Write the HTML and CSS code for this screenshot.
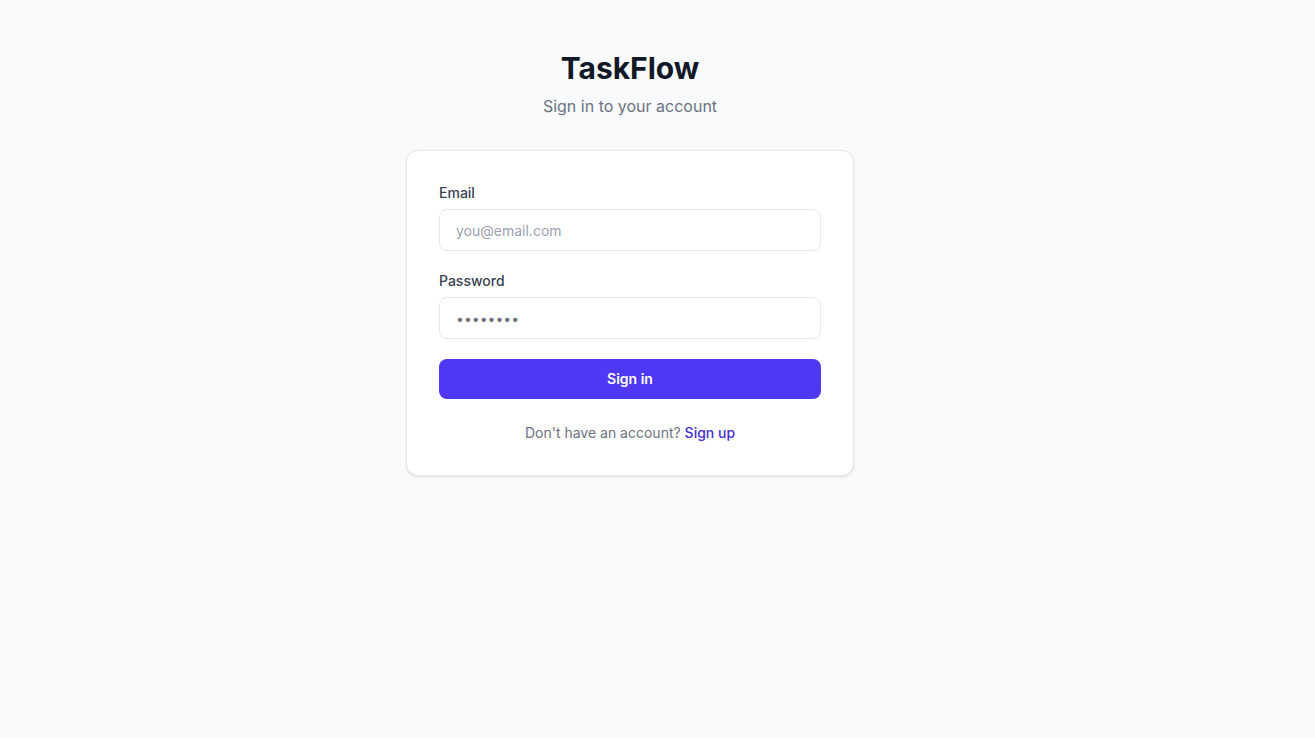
FILE: index.html
```html
<!DOCTYPE html>
<html lang="en">
<head>
<meta charset="utf-8">
<title>TaskFlow - Sign in</title>
<link rel="stylesheet" href="styles.css">
</head>
<body>
<main class="page">
  <header class="brand">
    <h1 class="brand-title">TaskFlow</h1>
    <p class="brand-sub">Sign in to your account</p>
  </header>
  <section class="card">
    <form class="form">
      <div class="field">
        <label class="label" for="email">Email</label>
        <input class="input" id="email" type="email" placeholder="you@email.com">
      </div>
      <div class="field">
        <label class="label" for="password">Password</label>
        <input class="input" id="password" type="password" value="password">
      </div>
      <button class="btn" type="button">Sign in</button>
    </form>
    <p class="footer-text">Don't have an account? <a class="link" href="#">Sign up</a></p>
  </section>
</main>
</body>
</html>
```
FILE: styles.css
```css
* { box-sizing: border-box; }
html, body { margin: 0; padding: 0; }
body {
  background: #f9fafb;
  font-family: Inter, "Noto Sans", sans-serif;
  color: #111827;
  min-height: 738px;
}
.page {
  display: flex;
  flex-direction: column;
  align-items: center;
  padding-top: 50px;
  padding-right: 55px;
}
.brand { text-align: center; margin-bottom: 32px; }
.brand-title {
  margin: 0;
  font-size: 30px;
  line-height: 36px;
  font-weight: 700;
  color: #111827;
}
.brand-sub {
  margin: 8px 0 0;
  font-size: 16px;
  line-height: 24px;
  color: #6b7280;
}
.card {
  width: 448px;
  background: #fff;
  border: 1px solid #e5e7eb;
  border-radius: 12px;
  box-shadow: 0 1px 3px rgba(0,0,0,0.08), 0 1px 2px rgba(0,0,0,0.04);
  padding: 32px;
}
.form { display: flex; flex-direction: column; gap: 20px; }
.field { display: flex; flex-direction: column; }
.label {
  font-size: 14px;
  line-height: 20px;
  font-weight: 500;
  color: #374151;
  margin-bottom: 6px;
}
.input {
  height: 42px;
  width: 100%;
  border: 1px solid #e5e7eb;
  border-radius: 8px;
  padding: 10px 16px;
  font-family: inherit;
  font-size: 14px;
  line-height: 20px;
  color: #6b7280;
  background: #fff;
  outline: none;
}
.input::placeholder { color: #99a1af; }
.btn {
  height: 40px;
  width: 100%;
  border: none;
  border-radius: 8px;
  background: #4f39f6;
  color: #fff;
  font-family: inherit;
  font-size: 14px;
  line-height: 20px;
  font-weight: 600;
  cursor: pointer;
}
.footer-text {
  margin: 24px 0 0;
  text-align: center;
  font-size: 14px;
  line-height: 20px;
  color: #6b7280;
}
.link { color: #432dd7; font-weight: 500; text-decoration: none; }
```
